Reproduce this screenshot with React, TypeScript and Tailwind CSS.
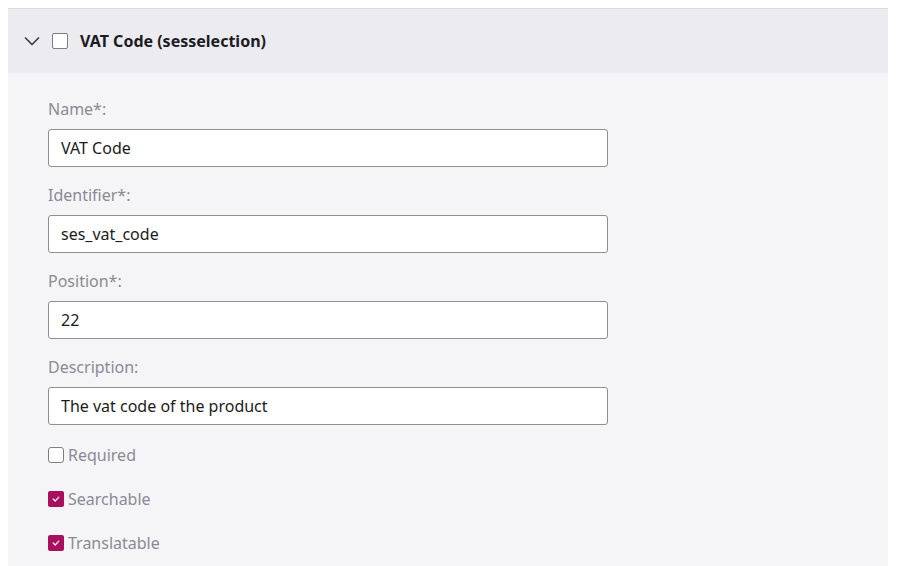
const font = { fontFamily: '"Noto Sans", "Open Sans", sans-serif' };

interface FieldProps {
  label: string;
  value: string;
}

function Field({ label, value }: FieldProps) {
  return (
    <div className="mb-4 flex flex-col">
      <label className="mb-2 text-base leading-6 text-[#8a8a96]">{label}</label>
      <input
        readOnly
        value={value}
        className="h-[38px] w-[560px] rounded-[3px] border border-[#8f8f8f] bg-white px-3 text-base text-[#1c1c1c] outline-none"
        style={font}
      />
    </div>
  );
}

function Check({ checked, label }: { checked: boolean; label: string }) {
  return (
    <div className="flex h-6 items-center">
      {checked ? (
        <span className="flex h-4 w-4 items-center justify-center rounded-[2px] bg-[#a8105d]">
          <svg width="10" height="10" viewBox="0 0 10 10" fill="none">
            <polyline points="2.2,5 4.2,7 7.8,3.2" stroke="white" strokeWidth="1.2" strokeLinecap="round" strokeLinejoin="round" />
          </svg>
        </span>
      ) : (
        <span className="h-4 w-4 rounded-[3px] border border-[#7d7d85] bg-white" />
      )}
      <span className="ml-1 text-base text-[#8a8a96]">{label}</span>
    </div>
  );
}

export default function App() {
  return (
    <div className="min-h-[566px] bg-white pl-2 pr-3 pt-2" style={font}>
      <div className="border-t border-[#dcdce0]">
        <div className="flex h-16 items-center bg-[#ebebf0] pl-4">
          <svg width="16" height="10" viewBox="0 0 16 10" fill="none">
            <polyline points="1,1.5 8,8.5 15,1.5" stroke="#2a2a2a" strokeWidth="1.3" />
          </svg>
          <span className="ml-3 h-4 w-4 rounded-[2px] border border-[#7d7d85] bg-white" />
          <span className="ml-3 text-base font-bold text-[#1c1c24]">VAT Code (sesselection)</span>
        </div>
        <div className="min-h-[493px] bg-[#f5f5f7] pl-10 pt-6">
          <Field label="Name*:" value="VAT Code" />
          <Field label="Identifier*:" value="ses_vat_code" />
          <Field label="Position*:" value="22" />
          <Field label="Description:" value="The vat code of the product" />
          <div className="flex flex-col gap-5 pt-0.5">
            <Check checked={false} label="Required" />
            <Check checked label="Searchable" />
            <Check checked label="Translatable" />
          </div>
        </div>
      </div>
    </div>
  );
}
